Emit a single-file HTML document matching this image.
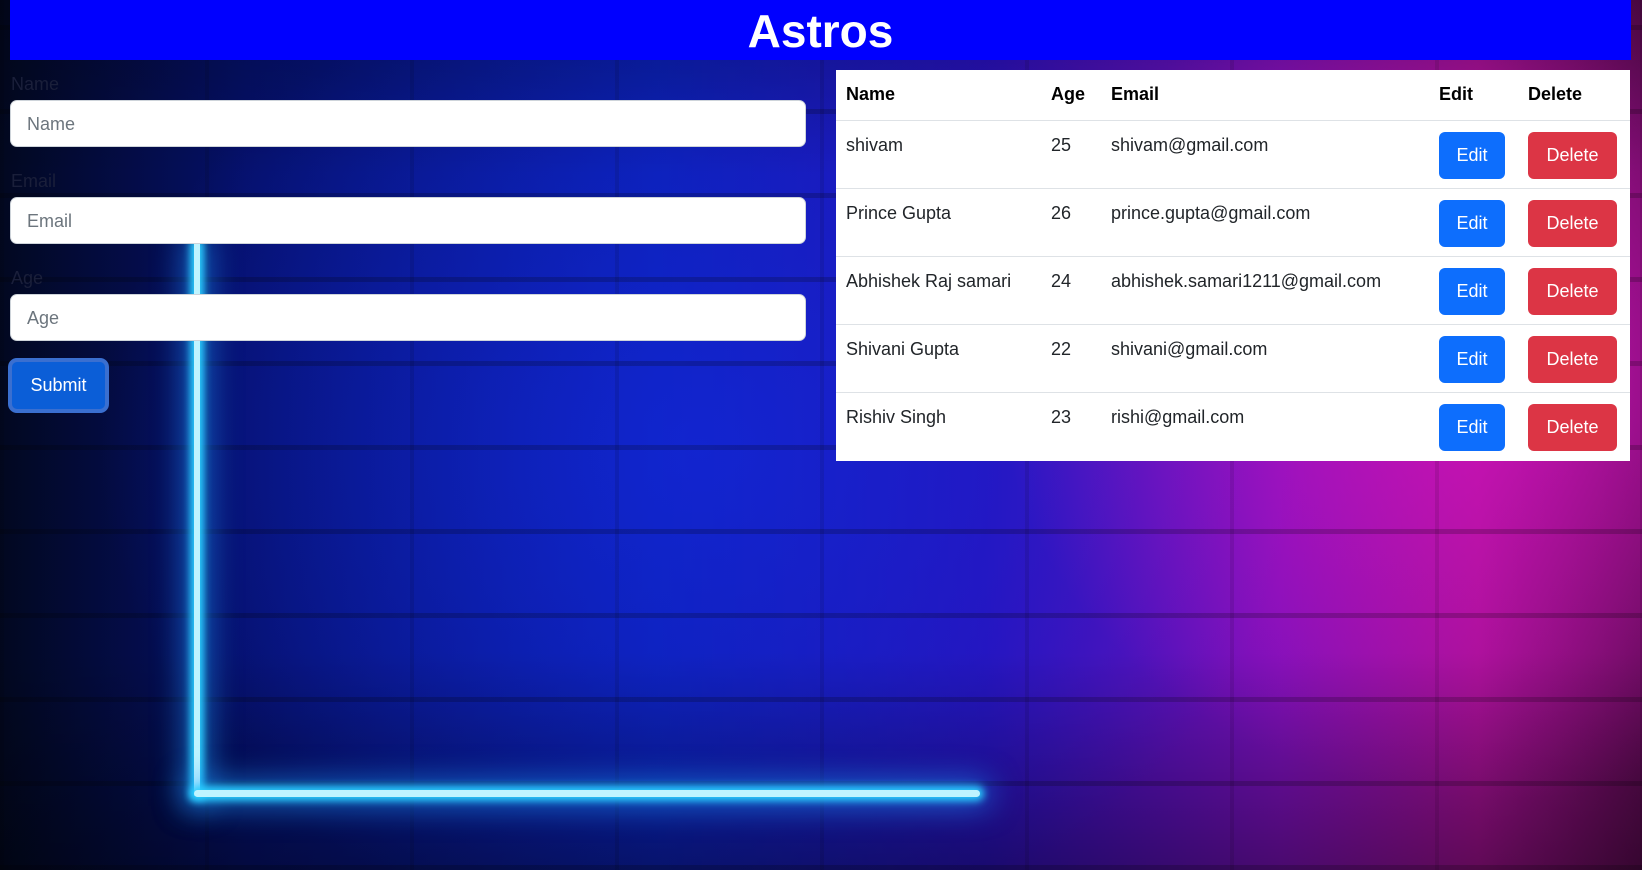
<!DOCTYPE html>
<html><head><meta charset="utf-8"><style>
*{box-sizing:border-box;margin:0;padding:0}
body{width:1642px;height:870px;overflow:hidden;font-family:"Segoe UI","Liberation Sans",sans-serif;position:relative;
background:
radial-gradient(ellipse 500px 420px at 1500px 380px,rgba(220,20,200,.7),transparent),
radial-gradient(ellipse 600px 500px at 700px 450px,rgba(20,40,220,.7),transparent),
linear-gradient(90deg,#020820 0%,#05106a 15%,#0a1fb0 40%,#2a10b8 60%,#7a10b8 78%,#a01090 90%,#5a0a50 100%);}
.bricks{position:absolute;inset:0;background:
repeating-linear-gradient(0deg,rgba(0,0,0,.2) 0 5px,transparent 5px 84px),
repeating-linear-gradient(90deg,rgba(0,0,0,.1) 0 4px,transparent 4px 205px);}
.vign{position:absolute;inset:0;background:linear-gradient(180deg,rgba(0,0,0,.25),transparent 20%,transparent 75%,rgba(0,0,0,.4))}
.neonv{position:absolute;left:194px;top:244px;width:6px;height:552px;background:#bff4ff;box-shadow:0 0 8px 4px #2ad0ff,0 0 30px 10px rgba(30,150,255,.6)}
.neonh{position:absolute;left:194px;top:790px;width:786px;height:7px;border-radius:4px;background:#bff4ff;box-shadow:0 0 8px 4px #2ad0ff,0 0 30px 10px rgba(30,150,255,.6)}
header{position:absolute;left:10px;top:0;width:1621px;height:60px;background:#0000ff;color:#fff;text-align:center;font-weight:bold;font-size:46px;line-height:62px}
label{position:absolute;left:11px;color:#1a1f3a;font-size:18px}
.inp{position:absolute;left:10px;width:796px;height:47px;background:#fff;border-radius:7px;border:1px solid #ced4da;color:#6c757d;font-size:18px;padding:11px 16px;line-height:24px}
.sub{position:absolute;left:8px;top:358px;width:101px;height:55px;background:#0b5ed7;border:4px solid #3a6fd0;border-radius:9px;color:#fff;font-size:18px;text-align:center;line-height:47px}
table{position:absolute;left:836px;top:70px;width:794px;height:391px;background:#fff;border-collapse:collapse;font-size:18px;color:#212529}
th{text-align:left;font-weight:bold;height:50px;padding:0 10px;border-bottom:1px solid #dee2e6;color:#000}
td{height:68px;padding:0 10px;vertical-align:top;padding-top:14px;border-bottom:1px solid #dee2e6}
tr:last-child td{border-bottom:none}
.b{display:inline-block;height:47px;line-height:47px;border-radius:6px;color:#fff;text-align:center;margin-top:-3px}
.e{background:#0d6efd;width:66px}.d{background:#dc3545;width:89px}
</style></head><body>
<div class="bricks"></div><div class="vign"></div>
<div class="neonv"></div><div class="neonh"></div>
<header>Astros</header>
<label style="top:74px">Name</label><div class="inp" style="top:100px">Name</div>
<label style="top:171px">Email</label><div class="inp" style="top:197px">Email</div>
<label style="top:268px">Age</label><div class="inp" style="top:294px">Age</div>
<div class="sub">Submit</div>
<table>
<colgroup><col style="width:205px"><col style="width:60px"><col style="width:328px"><col style="width:89px"><col></colgroup>
<tr><th>Name</th><th>Age</th><th>Email</th><th>Edit</th><th>Delete</th></tr>
<tr><td>shivam</td><td>25</td><td>shivam@gmail.com</td><td><span class="b e">Edit</span></td><td><span class="b d">Delete</span></td></tr>
<tr><td>Prince Gupta</td><td>26</td><td>prince.gupta@gmail.com</td><td><span class="b e">Edit</span></td><td><span class="b d">Delete</span></td></tr>
<tr><td>Abhishek Raj samari</td><td>24</td><td>abhishek.samari1211@gmail.com</td><td><span class="b e">Edit</span></td><td><span class="b d">Delete</span></td></tr>
<tr><td>Shivani Gupta</td><td>22</td><td>shivani@gmail.com</td><td><span class="b e">Edit</span></td><td><span class="b d">Delete</span></td></tr>
<tr><td>Rishiv Singh</td><td>23</td><td>rishi@gmail.com</td><td><span class="b e">Edit</span></td><td><span class="b d">Delete</span></td></tr>
</table>
</body></html>
